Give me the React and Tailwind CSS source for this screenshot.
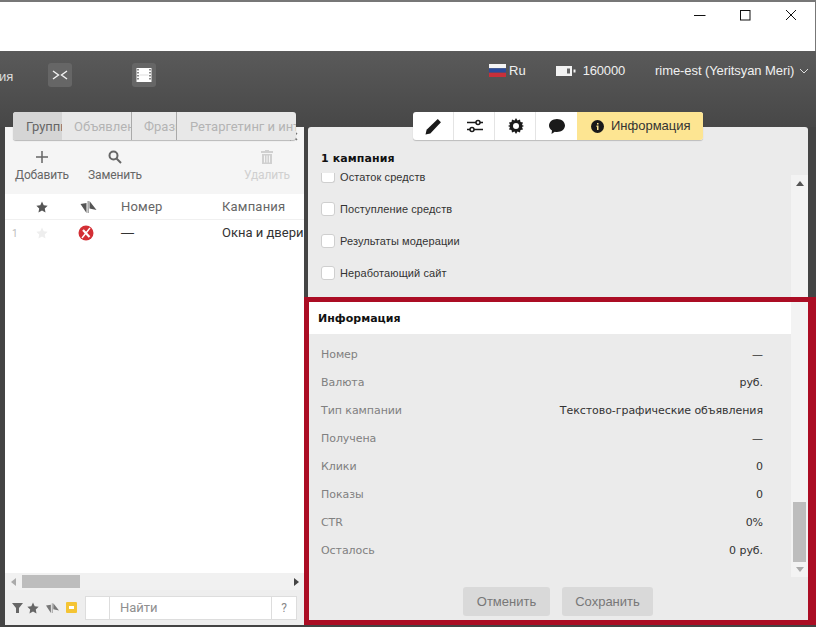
import React from "react";

const Check = ({ label }) => (
  <div className="flex items-center gap-[5px] h-[32px]">
    <span className="w-[14px] h-[14px] rounded-[3px] bg-white border border-[#cfcfcf]" />
    <span className="text-[11px] text-[#333] font-['Liberation_Sans',sans-serif] tracking-[0.1px]">{label}</span>
  </div>
);

const rows = [
  ["Номер", "—"],
  ["Валюта", "руб."],
  ["Тип кампании", "Текстово-графические объявления"],
  ["Получена", "—"],
  ["Клики", "0"],
  ["Показы", "0"],
  ["CTR", "0%"],
  ["Осталось", "0 руб."],
];

const Split = ({ className }) => (
  <svg viewBox="0 0 16 14" className={className} fill="currentColor">
    <path d="M0 4l6-1v10zM7.200 1h.8v12h-.8zM9 1l7 9-7-1.500z" />
  </svg>
);

const Star = ({ fill, className }) => (
  <svg width="12" height="12" viewBox="0 0 24 24" fill={fill} className={className}>
    <path d="M12 1l3.400 7.300 7.900 1-5.800 5.500 1.500 8L12 18.900 4.900 22.800l1.500-8L.7 9.300l7.900-1z" />
  </svg>
);

export default function App() {
  return (
    <div className="w-[816px] h-[627px] overflow-hidden flex flex-col relative font-['Liberation_Sans',sans-serif] bg-[#444]">
      {/* window title bar */}
      <div className="h-[51px] shrink-0 bg-white border-t-2 border-r border-[#777] flex justify-end items-start">
        <div className="flex items-center pr-[18px] pt-[7px]">
          <svg width="12" height="12" viewBox="0 0 12 12"><path d="M0 6.500h11.500" stroke="#111" /></svg>
          <svg width="12" height="12" viewBox="0 0 12 12" className="ml-[33px]"><rect x="1.500" y="1.500" width="9.500" height="9.500" fill="none" stroke="#111" /></svg>
          <svg width="12" height="12" viewBox="0 0 12 12" className="ml-[34px]"><path d="M1 1l10 10M11 1L1 11" stroke="#111" /></svg>
        </div>
      </div>

      {/* dark header */}
      <div className="h-[76px] shrink-0 bg-gradient-to-b from-[#5a5a5a] to-[#474747] flex items-start text-white">
        <span className="text-[13px] text-[#ddd] mt-[16px] w-[49px] -ml-[1px]">ия</span>
        <div className="w-[24px] h-[24px] mt-[12px] rounded-[3px] bg-[#666] flex items-center justify-center">
          <svg width="16" height="10" viewBox="0 0 16 10" fill="none" stroke="#f2f2f2" strokeWidth="1.400"><path d="M1 1l5.500 4L1 9M15 1L9.500 5 15 9" /></svg>
        </div>
        <div className="w-[24px] h-[24px] mt-[12px] ml-[60px] rounded-[3px] bg-[#666] flex items-center justify-center">
          <svg width="16" height="16" viewBox="0 0 16 16"><rect x="0.500" y="1" width="15" height="14" fill="#fff" /><path d="M2 2v12M14 2v12" stroke="#666" strokeWidth="1.500" strokeDasharray="1.500 1.500" /><path d="M3.500 8h9" stroke="#bbb" strokeWidth="0.500" /></svg>
        </div>
        <div className="flex items-center ml-[333px] mt-[10px] text-[13px] text-[#f0f0f0]">
          <svg width="17" height="13" viewBox="0 0 17 13" className="mr-[3px]"><rect width="17" height="4.300" fill="#f4f4f4" /><rect y="4.300" width="17" height="4.400" fill="#2b4b9b" /><rect y="8.700" width="17" height="4.300" fill="#c8303a" /></svg>
          <span>Ru</span>
          <svg width="20" height="10" viewBox="0 0 20 10" className="ml-[30px] mr-[7px]"><rect width="16" height="10" fill="#f2f2f2" /><rect x="11" y="2.500" width="3" height="5" fill="#666" /><rect x="17.500" y="3.500" width="2" height="3" fill="#f2f2f2" /></svg>
          <span className="tracking-[-0.15px]">160000</span>
          <span className="ml-[30px] tracking-[-0.08px]">rime-est (Yeritsyan Meri)</span>
          <svg width="10" height="6" viewBox="0 0 10 6" className="ml-[5px]" fill="none" stroke="#ddd"><path d="M1 1l4 4 4-4" /></svg>
        </div>
      </div>

      {/* body */}
      <div className="flex-1 min-h-0 flex items-stretch pl-[5px] pr-[8px] pb-[2px] gap-[4px]">
        {/* left panel */}
        <div className="w-[299px] shrink-0 bg-white flex flex-col relative font-['Roboto',sans-serif]">
          <svg width="9" height="9" viewBox="0 0 9 9" className="absolute top-[5px] right-[6px]" stroke="#777" strokeWidth="1.500"><path d="M1 1l7 7M8 1L1 8" /></svg>
          <div className="absolute -top-[15px] left-[8px] w-[283px] h-[28px] rounded-[3px] bg-[#e8e8e8] flex text-[13px] leading-[29px] text-[#b4b4b4] overflow-hidden shadow-[0_1px_1px_rgba(0,0,0,0.25)] z-10">
            <div className="w-[49px] bg-[#d5d5d5] text-[#666] pl-[13px] overflow-hidden whitespace-nowrap">Группы</div>
            <div className="w-[70px] border-r border-[#aaa] pl-[12px] overflow-hidden whitespace-nowrap">Объявления</div>
            <div className="w-[45px] border-r border-[#aaa] pl-[12px] overflow-hidden whitespace-nowrap">Фразы</div>
            <div className="flex-1 pl-[13px] overflow-hidden whitespace-nowrap">Ретаргетинг и интересы</div>
          </div>

          {/* toolbar */}
          <div className="h-[67px] shrink-0 bg-[#f5f5f5] flex text-[12px] tracking-[-0.15px] pt-[23px]">
            <div className="flex flex-col items-center w-[54px] ml-[10px] text-[#666]">
              <svg width="14" height="14" viewBox="0 0 14 14" stroke="#666" strokeWidth="1.500"><path d="M7 1v12M1 7h12" /></svg>
              <span className="mt-[2px]">Добавить</span>
            </div>
            <div className="flex flex-col items-center w-[54px] ml-[19px] text-[#666]">
              <svg width="14" height="14" viewBox="0 0 14 14" fill="none" stroke="#666" strokeWidth="2"><circle cx="5.500" cy="5.500" r="4" /><path d="M8.500 8.500l4.500 4.500" /></svg>
              <span className="mt-[2px]">Заменить</span>
            </div>
            <div className="flex flex-col items-center w-[46px] ml-[102px] text-[#d0d0d0]">
              <svg width="12" height="14" viewBox="0 0 12 14" fill="#d0d0d0"><path d="M4 0h4v1h4v2H0V1h4zM1 4h10v10H1zM3 5.500v7h1v-7zM5.500 5.500v7h1v-7zM8 5.500v7h1v-7z" fillRule="evenodd" /></svg>
              <span className="mt-[2px]">Удалить</span>
            </div>
          </div>

          {/* table head */}
          <div className="h-[26px] shrink-0 flex items-center text-[13px] tracking-[0.2px] text-[#666] border-b border-[#f0f0f0]">
            <Star fill="#555" className="ml-[31px]" />
            <Split className="w-[17px] h-[14px] ml-[32px] text-[#555]" />
            <span className="ml-[24px] w-[101px]">Номер</span>
            <span>Кампания</span>
          </div>
          {/* table row */}
          <div className="h-[26px] shrink-0 flex items-center text-[13px] text-[#333] whitespace-nowrap relative">
            <span className="absolute left-[7px] text-[10px] text-[#bbb]">1</span>
            <Star fill="#eee" className="ml-[31px]" />
            <svg width="16" height="16" viewBox="0 0 16 16" className="ml-[30px]">
              <circle cx="8" cy="8" r="7.500" fill="#d32f35" />
              <path d="M4 13L12 3" stroke="#fff" strokeWidth="1.400" />
              <path d="M5 5l6.500 7" stroke="#fff" strokeWidth="2.200" />
            </svg>
            <span className="ml-[27px] w-[101px] font-['Liberation_Sans',sans-serif]">—</span>
            <span>Окна и двери</span>
          </div>
          <div className="flex-1" />

          {/* horizontal scrollbar */}
          <div className="h-[17px] shrink-0 bg-[#f1f1f1] flex items-center">
            <svg width="5" height="8" viewBox="0 0 5 8" fill="#aaa" className="ml-[6px]"><path d="M5 0v8L0 4z" /></svg>
            <div className="w-[58px] h-[13px] bg-[#bdbdbd] ml-[6px]" />
            <div className="flex-1" />
            <svg width="5" height="8" viewBox="0 0 5 8" fill="#444" className="mr-[5px]"><path d="M0 0v8l5-4z" /></svg>
          </div>
          {/* filter bar */}
          <div className="h-[35px] shrink-0 bg-[#eeeeee] flex items-center">
            <svg width="11" height="10" viewBox="0 0 11 10" fill="#666" className="ml-[7px]"><path d="M0 0h11L7 5v5H4V5z" /></svg>
            <Star fill="#666" className="ml-[4px]" />
            <Split className="w-[13px] h-[12px] ml-[7px] text-[#777]" />
            <div className="w-[11px] h-[11px] ml-[7px] rounded-[1px] bg-[#f4c434] flex items-center justify-center"><span className="w-[5px] h-[3px] bg-white" /></div>
            <div className="w-[212px] h-[24px] ml-[8px] bg-white border border-[#ddd] flex items-center text-[13px]">
              <div className="w-[24px] h-full border-r border-[#ddd]" />
              <span className="ml-[10px] flex-1 text-[#8f8f8f]">Найти</span>
              <div className="w-[25px] h-full border-l border-[#ddd] flex items-center justify-center text-[12px] text-[#888]">?</div>
            </div>
          </div>
        </div>

        {/* right panel */}
        <div className="flex-1 rounded-t-[3px] bg-[#ebebeb] flex flex-col relative font-['DejaVu_Sans',sans-serif]">
          {/* mode tabs */}
          <div className="absolute -top-[15px] left-[105px] h-[28px] rounded-[3px] bg-white flex shadow-[0_1px_1px_rgba(0,0,0,0.2)] z-10 text-[#222]">
            <div className="w-[41px] pl-[1px] border-r border-[#e4e4e4] flex items-center justify-center">
              <svg width="17" height="17" viewBox="0 0 16 16" fill="#1a1a1a"><path d="M12 1l3 3L5 14.500 0.500 15.500 1.500 11z" /></svg>
            </div>
            <div className="w-[41px] pl-[1px] border-r border-[#e4e4e4] flex items-center justify-center">
              <svg width="16" height="14" viewBox="0 0 16 14" fill="none" stroke="#1a1a1a" strokeWidth="1.500"><path d="M0 3.500h9M13 3.500h3M0 10.500h3M7 10.500h9" /><circle cx="11" cy="3.500" r="2" /><circle cx="5" cy="10.500" r="2" /></svg>
            </div>
            <div className="w-[41px] pl-[1px] border-r border-[#e4e4e4] flex items-center justify-center">
              <svg width="16" height="16" viewBox="0 0 16 16" fill="#1a1a1a"><path fillRule="evenodd" d="M8 0l1.500 2.500L12 1.500l.5 2.500 2.500.5-1 2.500L16 8l-2 1 1 2.500-2.500.5-.5 2.500-2.500-1L8 16l-1.500-2.500-2.500 1L3.500 12 1 11.500 2 9 0 8l2-1-1-2.500 2.500-.5L4 1.500l2.500 1zM8 5a3 3 0 100 6 3 3 0 000-6z" /></svg>
            </div>
            <div className="w-[41px] flex items-center justify-center">
              <svg width="16" height="15" viewBox="0 0 16 15" fill="#1a1a1a"><path d="M8 0c4.400 0 8 2.800 8 6.500S12.400 13 8 13c-.8 0-1.500-.1-2.200-.2L2.500 15l.5-3.500C1.200 10.300 0 8.500 0 6.500 0 2.800 3.600 0 8 0z" /></svg>
            </div>
            <div className="w-[126px] rounded-r-[3px] bg-[#fde592] flex items-center pl-[14px] font-['Liberation_Sans',sans-serif] text-[13px] text-[#333]">
              <svg width="13" height="13" viewBox="0 0 13 13" className="mr-[7px]"><circle cx="6.500" cy="6.500" r="6.500" fill="#1a1a1a" /><path d="M5.500 5.500h2v4.500h-1.500V7H5.500zM6 3h1.500v1.500H6z" fill="#fde592" /></svg>
              Информация
            </div>
          </div>

          <div className="pl-[13px] pt-[24px] h-[46px] shrink-0 text-[11px] font-bold text-[#111] tracking-[0.1px]">1 кампания</div>

          <div className="flex-1 min-h-0 flex">
            <div className="w-[483px] flex flex-col">
              <div className="pl-[13px] h-[127px] shrink-0 overflow-hidden">
                <div className="flex items-start gap-[5px] h-[20px]">
                  <span className="w-[14px] h-[10px] rounded-b-[3px] bg-white border border-t-0 border-[#cfcfcf]" />
                  <span className="text-[11px] leading-[9px] text-[#333] tracking-[0.1px] font-['Liberation_Sans',sans-serif]">Остаток средств</span>
                </div>
                <Check label="Поступление средств" />
                <Check label="Результаты модерации" />
                <Check label="Неработающий сайт" />
              </div>
              <div className="h-[34px] shrink-0 bg-white flex items-center pl-[10px] pt-[5px] text-[11px] font-bold text-[#111]">Информация</div>
              <div className="flex flex-col pl-[13px] pr-[28px] pt-[7px] text-[11px] tracking-[-0.06px]">
                {rows.map(([k, v]) => (
                  <div key={k} className="h-[28px] flex items-center justify-between">
                    <span className="text-[#808080]">{k}</span>
                    <span className="text-[#333]">{v}</span>
                  </div>
                ))}
              </div>
            </div>
            {/* vertical scrollbar */}
            <div className="w-[17px] h-[402px] mt-[2px] shrink-0 bg-[#f3f3f3] flex flex-col items-center">
              <svg width="8" height="5" viewBox="0 0 8 5" fill="#555" className="mt-[6px]"><path d="M0 5h8L4 0z" /></svg>
              <div className="flex-1" />
              <div className="w-[13px] h-[60px] bg-[#bdbdbd]" />
              <svg width="8" height="5" viewBox="0 0 8 5" fill="#aaa" className="my-[5px]"><path d="M0 0h8L4 5z" /></svg>
            </div>
          </div>

          <div className="absolute bottom-[9px] left-[155px] flex gap-[12px] text-[13px] font-['Liberation_Sans',sans-serif] text-[#777]">
            <div className="w-[87px] h-[29px] rounded-[3px] bg-[#d9d9d9] flex items-center justify-center">Отменить</div>
            <div className="w-[91px] h-[29px] rounded-[3px] bg-[#d9d9d9] flex items-center justify-center">Сохранить</div>
          </div>
        </div>
      </div>

      {/* annotation frame */}
      <div className="absolute left-[304px] top-[297px] right-0 h-[328px] border-[#ab0d24] border-t-[5px] border-l-[5px] border-b-[5px] border-r-[8px] pointer-events-none z-20" />
    </div>
  );
}
